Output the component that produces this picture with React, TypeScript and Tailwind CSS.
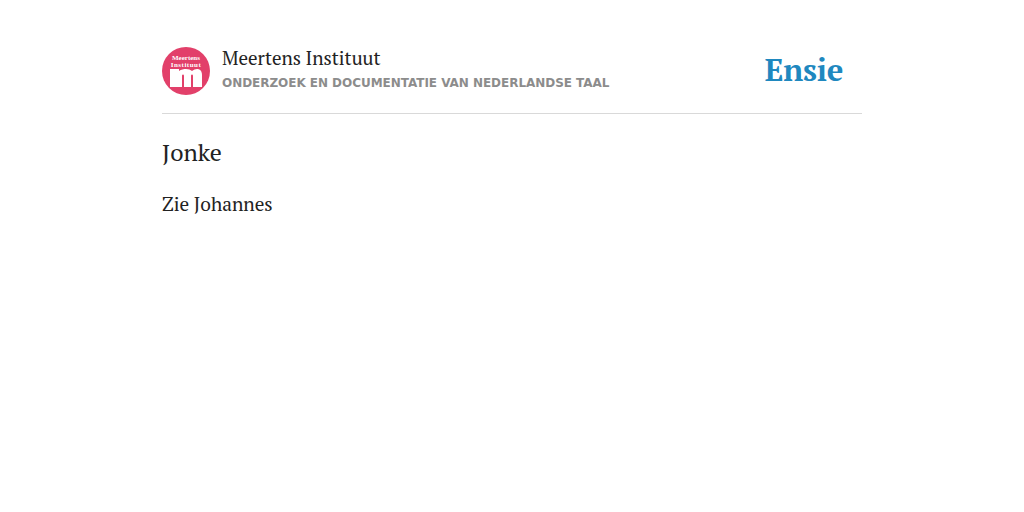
import React from 'react';

const serif = "font-['PT_Serif','Noto_Serif','DejaVu_Serif','Liberation_Serif',serif]";

const Logo = () => (
  <div className="w-12 h-12 rounded-full bg-[#e2406a] flex flex-col items-center flex-none overflow-hidden">
    <span className="text-white text-[7px] leading-[7px] font-bold mt-[8px] font-['Liberation_Serif',serif]">Meertens</span>
    <span className="text-white text-[7px] leading-[7px] font-bold font-['Liberation_Serif',serif] tracking-[0.5px]">Instituut</span>
    <svg width="32" height="18" viewBox="0 0 32 18">
      <path d="M0 0h9v2c2-1.500 5-2 7-2 2.500 0 4.500 .7 6 2 1.500-1.300 3.500-2 5-2 3 0 5 2 5 6v12h-9V7c0-1-.5-1.500-1-1.500s-1 .5-1 1.500v11h-7V7c0-1-.5-1.500-1-1.500s-1 .5-1 1.500v11H0z" fill="#fff" />
    </svg>
  </div>
);

export default function App() {
  return (
    <div className="w-full min-h-screen bg-white">
      <div className="w-[700px] mx-auto pt-[47px]">
        <header className="flex items-center justify-between border-b border-[#d9d9d9] pb-[18px]">
          <div className="flex items-start gap-3">
            <Logo />
            <div className="-mt-[1px]">
              <div className={`${serif} text-[19px] leading-[24px] text-[#222]`}>Meertens Instituut</div>
              <div className="font-['DejaVu_Sans',sans-serif] font-bold text-[12px] leading-[16px] mt-[5px] text-[#8c8c8c] tracking-[-0.04px]">ONDERZOEK EN DOCUMENTATIE VAN NEDERLANDSE TAAL</div>
            </div>
          </div>
          <div className={`${serif} text-[31px] leading-[40px] font-bold text-[#1f88bf] mr-[19px] -mt-[3px] tracking-[-0.3px]`}>Ensie</div>
        </header>
        <h1 className={`${serif} text-[24px] leading-[32px] text-[#222] mt-[22px]`}>Jonke</h1>
        <p className={`${serif} text-[19.2px] leading-[28px] text-[#222] mt-[22px]`}>Zie Johannes</p>
      </div>
    </div>
  );
}
